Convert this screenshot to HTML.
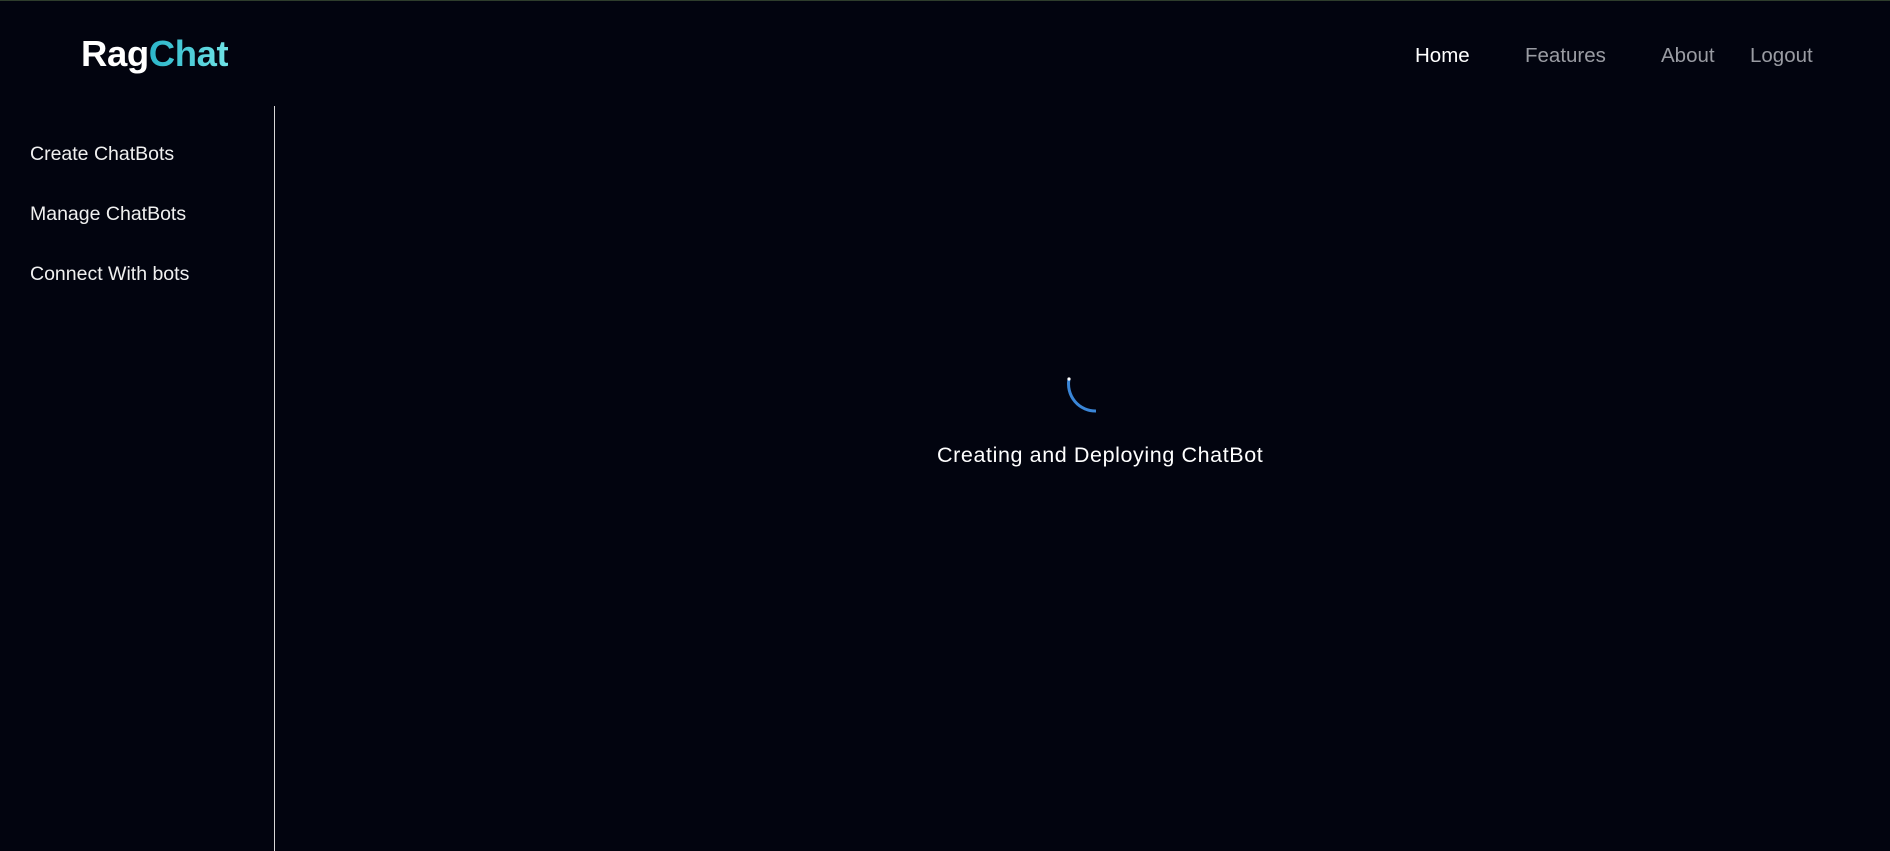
<!DOCTYPE html>
<html><head><meta charset="utf-8"><style>
html,body{margin:0;padding:0;width:1890px;height:851px;overflow:hidden;background:#02040f;font-family:"Liberation Sans",sans-serif;color:#fff;}
.top{position:absolute;left:0;top:0;width:1890px;height:1px;background:#2e3d2c;}
.logo{position:absolute;left:81px;top:33px;font-size:36.5px;font-weight:bold;letter-spacing:-0.4px;}
.logo span{background:linear-gradient(90deg,#2bb5c9,#6fe3e6);-webkit-background-clip:text;color:transparent;}
.nav a{position:absolute;top:44px;font-size:20.5px;color:#9a9ca3;text-decoration:none;}
.side{position:absolute;left:274px;top:106px;width:1px;height:745px;background:#d8d8d8;}
.menu{position:absolute;left:30px;font-size:19.5px;color:#f0f0f0;}
.msg{position:absolute;left:937px;top:443px;font-size:21.5px;letter-spacing:0.6px;color:#fff;white-space:nowrap;}
</style></head><body>
<div class="top"></div>
<div class="logo">Rag<span>Chat</span></div>
<div class="nav">
<a style="left:1415px;color:#fff">Home</a>
<a style="left:1525px">Features</a>
<a style="left:1661px">About</a>
<a style="left:1750px">Logout</a>
</div>
<div class="side"></div>
<div class="menu" style="top:143px">Create ChatBots</div>
<div class="menu" style="top:203px">Manage ChatBots</div>
<div class="menu" style="top:263px">Connect With bots</div>
<svg style="position:absolute;left:1060px;top:370px" width="60" height="50">
<path d="M9 9 A27 27 0 0 0 36 41" fill="none" stroke="#3a86d8" stroke-width="3"/>
<circle cx="9" cy="9" r="1.6" fill="#fff"/>
</svg>
<div class="msg">Creating and Deploying ChatBot</div>
</body></html>
